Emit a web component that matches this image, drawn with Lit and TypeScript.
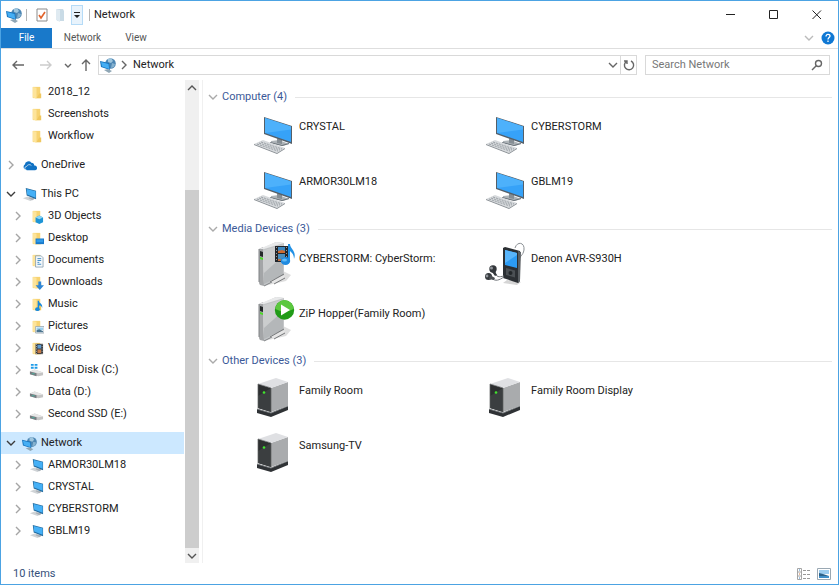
import { LitElement, html, css, svg, nothing } from "lit";
import { customElement, property } from "lit/decorators.js";
import { classMap } from "lit/directives/class-map.js";

/* ---------- shared glyphs ---------- */

const chevron = (dir: "right" | "down" | "up") => {
  const d = { right: "M3 1l4 4-4 4", down: "M1 3l4 4 4-4", up: "M1 7l4-4 4 4" }[dir];
  return html`<svg viewBox="0 0 10 10" width="10" height="10" fill="none" stroke="currentColor" stroke-width="1.4"><path d=${d}></path></svg>`;
};

const folder = svg`<path d="M4 2h8v12H4z" fill="#f7d372"/><path d="M4 2l4 1v12l-4-2z" fill="#fde49b"/><path d="M11 9h2v5H8z" fill="#f0c75e"/>`;
const flag = svg`<path d="M2 1h3v2H2zM6 1h3v2H6zM2 4h3v2H2zM6 4h3v2H6z" fill="#1e9be8"/>`;
const drive = svg`<path d="M1 9l5-2 9 3v3l-5 1-9-2z" fill="#c4c4c4"/><path d="M1 9l5-2 9 3-5 1z" fill="#e6e6e6"/><path d="M1 9l7 2v3l-7-2z" fill="#777b80"/><path d="M3 11h3v1H3z" fill="#49b7a2"/>`;
const globe = svg`<circle cx="10.500" cy="6.500" r="5.300" fill="#4d86b3"/><path d="M8 2l3-1 2 3-2 2-3-1z" fill="#9fc6de"/><path d="M12 6l3 1-1 3-3 1z" fill="#86b2cf"/><path d="M0 4l9 2 1 7-9-3z" fill="#1673bd"/><path d="M1 5l7.500 2 .7 5L2 9.500z" fill="#45aef4"/><path d="M4 13l4-1 4 2-3 2z" fill="#8fa6b5"/>`;

const smallIcons: Record<string, unknown> = {
  folder,
  cloud: svg`<path d="M3 12a3 3 0 0 1 0-5 4 4 0 0 1 7-2 3 3 0 0 1 3 3 2.500 2.500 0 0 1 1 5H5z" fill="#1172c4"/><path d="M5 13a2 2 0 0 1 0-4 3 3 0 0 1 5-1" fill="none" stroke="#fff" stroke-width=".7"/>`,
  pc: svg`<path d="M1 12l5-2 7 3-4 2z" fill="#cfd3d6"/><path d="M8 11l6 1-3 2-4-2z" fill="#a9b0b6"/><path d="M4 1l11 3v9L5 9z" fill="#246b9e"/><path d="M5 2l9.500 2.500v7L5.500 8z" fill="#45b0f6"/>`,
  network: globe,
  objects: svg`${folder}<path d="M7 9l4-2 4 2v5l-4 2-4-2z" fill="#1d94d6"/><path d="M7 9l4-2 4 2-4 2z" fill="#8bd5f4"/>`,
  desktop: svg`${folder}<path d="M7 8h9v6H7z" fill="#1979ca"/><path d="M8 9h7v3H8z" fill="#2f9ae8"/>`,
  documents: svg`${folder}<path d="M7 3h6l2 2v10H7z" fill="#f4f8fb" stroke="#8198a8" stroke-width=".8"/><path d="M9 6h4M9 8h4M9 10h2M9 12h4" stroke="#3d8bc4"/>`,
  downloads: svg`${folder}<path d="M10 7h3v4h3l-4.500 5L7 11h3z" fill="#2f86d6"/>`,
  music: svg`${folder}<path d="M10 4v8" stroke="#1688dc" stroke-width="1.500"/><path d="M10 4c1 3 5 3 4 8 0-3-3-3-4-3z" fill="#1688dc"/><ellipse cx="9" cy="13" rx="2.500" ry="2" fill="#1688dc"/>`,
  pictures: svg`${folder}<path d="M7 8h9v7H7z" fill="#fff" stroke="#93a1ab" stroke-width=".8"/><path d="M8 9h7v3H8z" fill="#9cd0ef"/><path d="M8 14v-2l3-1 4 2v1z" fill="#4c7690"/>`,
  videos: svg`${folder}<path d="M7 3h8v11H7z" fill="#34383d"/><path d="M9 4h4v4H9z" fill="#5f9bd0"/><path d="M9 9h4v4H9z" fill="#c47a46"/><path d="M8 3v11M14 3v11" stroke="#ddd" stroke-dasharray="1 1.500" stroke-width=".8"/>`,
  system: svg`${flag}${drive}`,
  drive,
};

const smallIcon = (name: string, size = 16) =>
  html`<svg viewBox="0 0 16 16" width=${size} height=${size} aria-hidden="true">${smallIcons[name]}</svg>`;

/* ---------- device pictures, 48 x 48 ---------- */

const box = svg`
  <path d="M14 46l22-5 5-6-8-4z" fill="#dedede"/>
  <path d="M9 9l4-2 1 39-4-1q-1-1-1-3z" fill="#a3a5a7"/>
  <path d="M13 8L26 2l8 1v33L14 46z" fill="#c4c6c8"/>
  <path d="M14 10L33 4v31L14 44z" fill="#b4b7b9"/>
  <path d="M14 10L33 4v12L14 33z" fill="#cbcdce"/>
  <path d="M9 9L26 2l8 1-20 6z" fill="#e8e9ea"/>
  <path d="M9 9v33M14 46l20-10" stroke="#808386" fill="none"/>
  <path d="M21 41l13-6 1 2-12 7z" fill="#e5e5e5"/><path d="M20 42l14-8M24 44l11-6" stroke="#77797b"/>
  <path d="M10 11l3 1v5l-3-1z" fill="#24282a"/><path d="M10 17l3 1v2l-3-1z" fill="#4bdc25"/>`;

const bigIcons: Record<string, unknown> = {
  computer: svg`
    <path d="M21 33l8-1 10 4-6 2-12-3z" fill="#aeb4b8"/><path d="M27 30l5 2v4l-5-1z" fill="#868e94"/>
    <path d="M20 34l12 3 7-2v1l-7 2-12-3z" fill="#697178"/>
    <path d="M14 9l28 9v18L14 26z" fill="#555f68"/><path d="M15 10l26 8.500V34L15 25z" fill="#36a2f8"/>
    <path d="M15 10l26 8.500v3L15 25z" fill="#4db1fb"/>
    <path d="M4 36l9-4 22 8-8 5z" fill="#d6d9dc"/><path d="M4 36l23 9 8-5v1l-8 5L4 37z" fill="#898f94"/>
    <path d="M7 36l21 7M9 35l21 7M11 34l21 7" stroke="#9aa0a5" stroke-dasharray="2 1" fill="none"/>`,
  media: svg`${box}
    <path d="M25 6h13v16H25z" fill="#22262b"/><path d="M28 7h7v6h-7z" fill="#3d86bd"/><path d="M28 11l4-1 3 1v2h-7z" fill="#ce6b30"/>
    <path d="M28 14h7v7h-7z" fill="#4a8fbd"/><path d="M28 19h7v2h-7z" fill="#bd6c3d"/>
    <path d="M26.500 7v14M36.500 7v14" stroke="#9a9a9a" stroke-dasharray="1 2" fill="none"/>
    <path d="M38 4h2c0 5 7 7 4 15 0-5-3-7-4-8v11h-2z" fill="#2291e5"/><ellipse cx="35.500" cy="21" rx="4.700" ry="4" fill="#1f8ae0"/><ellipse cx="34.500" cy="20" rx="2.500" ry="1.600" fill="#63bbf4"/>`,
  hopper: svg`${box}
    <circle cx="34.500" cy="15" r="9.700" fill="#219b18"/><path d="M25.500 14a9 9 0 0 1 18 0q-9 5-18 0z" fill="#5cc83f"/>
    <path d="M31 9.500v11l9-5.500z" fill="#fff"/>`,
  player: svg`
    <path d="M33 8c2-7 10-6 9 2-1 6-5 6-5 11" fill="none" stroke="#8a8f93"/>
    <path d="M21 43l4-3 14 2-4 3z" fill="#d5d5d5"/>
    <path d="M21 8l2-1 15 4v30l-2 2-15-5z" fill="#2b2f33"/><path d="M36 11l3 1-1 29-2 2z" fill="#5a5f63"/>
    <path d="M23 10l12 3v15l-12-3z" fill="#2c9cf5"/><path d="M23 10l12 3v2L23 23z" fill="#58b5fb"/>
    <path d="M24 28l9 2.500v7L24 35z" fill="#4b5054"/><circle cx="28.500" cy="33" r="2" fill="#222629"/>
    <path d="M13 31c1 7 4 6 9 5M9 38c5 4 8 2 13-1" fill="none" stroke="#777b7f"/>
    <circle cx="11" cy="29" r="3.700" fill="#34383c"/><circle cx="9.500" cy="28" r="1.500" fill="#90959a"/><path d="M12 30l3 5-2 1-3-4z" fill="#34383c"/>
    <circle cx="6.500" cy="36.500" r="3.500" fill="#34383c"/><circle cx="5" cy="36" r="1.400" fill="#90959a"/><path d="M8 35l5 3-1 2-5-1z" fill="#4a4e52"/>`,
  tower: svg`
    <path d="M7 37l14 4 17-7v4L21 45 7 41z" fill="#2f3235"/><path d="M7 37l14 4 17-7" stroke="#75797c" fill="none"/>
    <path d="M8 12l13 4v24L8 36z" fill="#2d2f30"/><path d="M8 24l13-8v24L8 36z" fill="#3b3e40"/>
    <path d="M21 16l17-6v24l-17 6z" fill="#a9abad"/><path d="M8 12l18-6 12 4-17 6z" fill="#dfe0e3"/>
    <path d="M8 36V12l13 4v24" stroke="#5b5e60" stroke-width=".7" fill="none"/>
    <circle cx="14" cy="20.500" r="1.300" fill="#41e52e"/>`,
};

/* ---------- navigation tree ---------- */

interface Node {
  label: string;
  icon: string;
  level: 1 | 2;
  open?: boolean;
  leaf?: boolean;
  selected?: boolean;
}

const sections: Node[][] = [
  ["2018_12", "Screenshots", "Workflow"].map((label) => ({ label, icon: "folder", level: 2, leaf: true })),
  [{ label: "OneDrive", icon: "cloud", level: 1 }],
  [
    { label: "This PC", icon: "pc", level: 1, open: true },
    { label: "3D Objects", icon: "objects", level: 2 },
    { label: "Desktop", icon: "desktop", level: 2 },
    { label: "Documents", icon: "documents", level: 2 },
    { label: "Downloads", icon: "downloads", level: 2 },
    { label: "Music", icon: "music", level: 2 },
    { label: "Pictures", icon: "pictures", level: 2 },
    { label: "Videos", icon: "videos", level: 2 },
    { label: "Local Disk (C:)", icon: "system", level: 2 },
    { label: "Data (D:)", icon: "drive", level: 2 },
    { label: "Second SSD (E:)", icon: "drive", level: 2 },
  ],
  [
    { label: "Network", icon: "network", level: 1, open: true, selected: true },
    ...["ARMOR30LM18", "CRYSTAL", "CYBERSTORM", "GBLM19"].map((label) => ({ label, icon: "pc", level: 2 as const })),
  ],
];

@customElement("nav-pane")
export class NavPane extends LitElement {
  static styles = css`
    :host { display: flex; width: 202px; flex: none; box-sizing: border-box; border-right: 1px solid #f0f0f0; }
    .tree { flex: 1; display: flex; flex-direction: column; gap: 7px; min-width: 0; padding-top: 1px; }
    .row {
      display: flex; align-items: center; gap: 4px; width: 100%; height: 22px; padding: 0 0 0 5px;
      border: 0; background: none; font: inherit; color: #222; text-align: left; white-space: nowrap;
    }
    .child { padding-left: 12px; }
    .selected { background: #cce8ff; }
    .arrow { display: flex; width: 10px; color: #a5a5a5; }
    .open { color: #3c3c3c; }
    .icon { display: flex; margin-left: 2px; }
    .scroll { flex: none; width: 14px; margin: 0 3px 0 1px; display: flex; flex-direction: column; background: #f0f0f0; }
    .step { display: flex; align-items: center; justify-content: center; height: 15px; padding: 0; border: 0; background: none; color: #555; }
    .track { flex: 1; display: flex; flex-direction: column; }
    .before { flex: 95; }
    .thumb { flex: 358; background: #cdcdcd; }
  `;
  row(n: Node) {
    return html`<button class=${classMap({ row: true, child: n.level === 2, selected: !!n.selected })}>
      <span class=${classMap({ arrow: true, open: !!n.open })}>${n.leaf ? nothing : chevron(n.open ? "down" : "right")}</span>
      <span class="icon">${smallIcon(n.icon, 15)}</span>
      <span>${n.label}</span>
    </button>`;
  }
  render() {
    return html`
      <nav class="tree" aria-label="Folders">
        ${sections.map((s) => html`<div>${s.map((n) => this.row(n))}</div>`)}
      </nav>
      <div class="scroll">
        <button class="step" aria-label="Scroll up">${chevron("up")}</button>
        <div class="track"><div class="before"></div><div class="thumb"></div></div>
        <button class="step" aria-label="Scroll down">${chevron("down")}</button>
      </div>`;
  }
}

/* ---------- device groups ---------- */

@customElement("device-group")
export class DeviceGroup extends LitElement {
  @property() heading = "";
  @property({ attribute: false }) items: [string, string][] = [];
  static styles = css`
    :host { display: block; }
    .head { display: flex; align-items: center; gap: 4px; height: 22px; }
    .toggle { display: flex; padding: 0; border: 0; background: none; color: #aaa; }
    .title { margin: 0; font-size: 11px; font-weight: 400; color: #3b5998; }
    .rule { flex: 1; height: 1px; margin-left: 4px; background: #e6e6e6; }
    .grid { display: grid; grid-template-columns: repeat(auto-fill, 232px); padding-left: 42px; }
    .item {
      display: flex; align-items: flex-start; gap: 1px; height: 55px; padding: 0;
      border: 0; background: none; font: inherit; color: #222; text-align: left; white-space: nowrap;
    }
    .name { line-height: 16px; padding-top: 11px; }
  `;
  render() {
    return html`
      <div class="head">
        <button class="toggle" aria-label="Collapse group">${chevron("down")}</button>
        <h2 class="title">${this.heading} (${this.items.length})</h2>
        <span class="rule"></span>
      </div>
      <div class="grid">
        ${this.items.map(([name, icon]) => html`<button class="item">
          <svg viewBox="0 0 48 48" width="48" height="48" aria-hidden="true">${bigIcons[icon]}</svg>
          <span class="name">${name}</span>
        </button>`)}
      </div>`;
  }
}

/* ---------- window ---------- */

@customElement("app-root")
export class AppRoot extends LitElement {
  static styles = css`
    :host {
      display: flex; flex-direction: column; min-height: 100vh; box-sizing: border-box;
      border: 1px solid #4ca3e3; background: #fff; color: #222;
      font: 11px/16px Roboto, "Open Sans", sans-serif;
    }
    button, input { font: inherit; }
    button { padding: 0; border: 0; background: none; color: inherit; display: flex; align-items: center; justify-content: center; }
    .title-bar { display: flex; align-items: center; height: 27px; padding-left: 5px; }
    .app { display: flex; width: 16px; }
    .sep { width: 1px; height: 12px; background: #b5b5b5; margin: 0 4px; }
    .quick { display: flex; align-items: center; margin-left: 2px; }
    .quick button { width: 18px; height: 20px; }
    .quick .more { width: 12px; margin: 0 2px; background: #e8f3fc; box-shadow: inset 0 0 0 1px #b5dbf7; }
    .caption { flex: 1; margin: 0; font-size: 11px; font-weight: 400; }
    .win { width: 43px; height: 26px; }
    .tabs { display: flex; height: 20px; border-bottom: 1px solid #dedede; font-size: 10px; color: #555; }
    .tab { height: 20px; width: 46px; }
    .wide { width: 61px; }
    .file { width: 51px; background: #1979ca; color: #fff; }
    .fill { flex: 1; }
    .ribbon { width: 18px; color: #bbb; }
    .help { width: 20px; }
    .bar { display: flex; align-items: center; height: 31px; padding: 0 8px 0 3px; color: #666; }
    .step { width: 28px; height: 20px; }
    .dim { color: #ccc; }
    .short { width: 16px; }
    .up { width: 20px; }
    .address {
      flex: 1; display: flex; align-items: center; height: 20px; box-sizing: border-box; margin-left: 2px;
      border: 1px solid #d9d9d9; color: #666;
    }
    .crumb { color: #222; margin-left: 4px; }
    .glyph { display: flex; margin: 0 3px 0 1px; }
    .small { width: 14px; height: 18px; }
    .refresh { width: 16px; height: 18px; border-left: 1px solid #d9d9d9; }
    .search {
      width: 185px; display: flex; align-items: center; height: 20px; box-sizing: border-box; margin-left: 8px;
      border: 1px solid #d9d9d9; padding: 0 6px;
    }
    .field { flex: 1; min-width: 0; padding: 0; border: 0; outline: 0; background: none; color: #222; }
    .field::placeholder { color: #777; opacity: 1; }
    .body { flex: 1; display: flex; }
    .content { flex: 1; min-width: 0; padding: 6px 6px 0 5px; }
    .status { display: flex; align-items: center; height: 21px; padding: 0 4px 0 12px; color: #35507a; }
    .view { width: 20px; height: 18px; }
  `;
  render() {
    return html`
      <header class="title-bar">
        <span class="app">${smallIcon("network")}</span>
        <span class="sep"></span>
        <div class="quick">
          <button aria-label="Properties">
            <svg viewBox="0 0 14 14" width="14" height="14" fill="none"><path d="M2 1h10v12H2z" stroke="#8b8b8b"></path><path d="M4 7l2 3 4-6" stroke="#e2632b" stroke-width="1.600"></path></svg>
          </button>
          <button aria-label="New folder">
            <svg viewBox="0 0 14 14" width="14" height="14"><path d="M4 1h6l1 2v10H4z" fill="#c9dbe6"></path><path d="M3 1l4 1v12l-4-2z" fill="#dfeaf1"></path></svg>
          </button>
          <button class="more" aria-label="Customize toolbar">
            <svg viewBox="0 0 8 8" width="8" height="8"><path d="M1 1h6v1H1zM1 4h6L4 7z" fill="#222"></path></svg>
          </button>
        </div>
        <span class="sep"></span>
        <h1 class="caption">Network</h1>
        <button class="win" aria-label="Minimize"><svg width="10" height="10"><path d="M0 4.500h9" stroke="#222"></path></svg></button>
        <button class="win" aria-label="Maximize"><svg width="10" height="10"><path d="M.5.500h8v8h-8z" fill="none" stroke="#222"></path></svg></button>
        <button class="win" aria-label="Close"><svg width="10" height="10"><path d="M.5.500l8.500 8.500M9 .500L.5 9" stroke="#222"></path></svg></button>
      </header>

      <div class="tabs">
        <button class="tab file">File</button>
        <button class="tab wide">Network</button>
        <button class="tab">View</button>
        <span class="fill"></span>
        <button class="ribbon" aria-label="Expand ribbon">${chevron("down")}</button>
        <button class="help" aria-label="Help">
          <svg width="14" height="14" viewBox="0 0 14 14" fill="none"><circle cx="7" cy="7" r="6.500" fill="#0f78d4"></circle><path d="M5 5.500c0-3 4-2.500 4-.5 0 1.500-2 1.500-2 3.500M7 9.500v1.500" stroke="#fff" stroke-width="1.300"></path></svg>
        </button>
      </div>

      <div class="bar">
        <button class="step" aria-label="Back"><svg width="12" height="10" fill="none" stroke="currentColor" stroke-width="1.400"><path d="M12 5H1M5 1L1 5l4 4"></path></svg></button>
        <button class="step dim" aria-label="Forward"><svg width="12" height="10" fill="none" stroke="currentColor" stroke-width="1.400"><path d="M0 5h11M7 1l4 4-4 4"></path></svg></button>
        <button class="short" aria-label="Recent locations"><svg width="8" height="8" fill="none" stroke="currentColor" stroke-width="1.400"><path d="M1 3l3 3 3-3"></path></svg></button>
        <button class="up" aria-label="Up"><svg width="10" height="12" fill="none" stroke="currentColor" stroke-width="1.400"><path d="M5 12V1M1 5l4-4 4 4"></path></svg></button>
        <div class="address">
          <span class="glyph">${smallIcon("network")}</span>
          ${chevron("right")}
          <span class="crumb">Network</span>
          <span class="fill"></span>
          <button class="small" aria-label="Previous locations">${chevron("down")}</button>
          <button class="refresh" aria-label="Refresh"><svg width="12" height="12" fill="none" stroke="currentColor" stroke-width="1.400"><path d="M8 2a4.600 4.600 0 1 1-4.500.3M1 2h3v3"></path></svg></button>
        </div>
        <label class="search">
          <input class="field" type="text" placeholder="Search Network" aria-label="Search Network" />
          <svg width="12" height="12" fill="none" stroke="currentColor" stroke-width="1.400"><circle cx="7.500" cy="4.500" r="3"></circle><path d="M5.500 6.500L1 11"></path></svg>
        </label>
      </div>

      <div class="body">
        <nav-pane></nav-pane>
        <main class="content">
          <device-group heading="Computer" .items=${[["CRYSTAL", "computer"], ["CYBERSTORM", "computer"], ["ARMOR30LM18", "computer"], ["GBLM19", "computer"]]}></device-group>
          <device-group heading="Media Devices" .items=${[["CYBERSTORM: CyberStorm:", "media"], ["Denon AVR-S930H", "player"], ["ZiP Hopper(Family Room)", "hopper"]]}></device-group>
          <device-group heading="Other Devices" .items=${[["Family Room", "tower"], ["Family Room Display", "tower"], ["Samsung-TV", "tower"]]}></device-group>
        </main>
      </div>

      <footer class="status">
        <span>10 items</span>
        <span class="fill"></span>
        <button class="view" aria-label="Details view">
          <svg width="14" height="12" fill="none"><path d="M.5.500h4v11h-4zM.5 4h4M.5 8h4" stroke="#a5a5a5"></path><path d="M2 2h1M2 10h1" stroke="#3f84c4"></path><path d="M2 6h1" stroke="#d2763f"></path><path d="M6 2.500h3m1 0h3M6 6.500h3m1 0h3M6 10.500h3m1 0h3" stroke="#999"></path></svg>
        </button>
        <button class="view" aria-label="Large icons view">
          <svg width="14" height="12"><path d="M.5.500h13v11H.5z" fill="#fff" stroke="#9aa8b3"></path><path d="M2 2h10v4H2z" fill="#9ccdf0"></path><path d="M2 5l4 1 6 2v2H2z" fill="#2c628a"></path><path d="M2 8h10v2H2z" fill="#3f8fc9"></path></svg>
        </button>
      </footer>`;
  }
}
